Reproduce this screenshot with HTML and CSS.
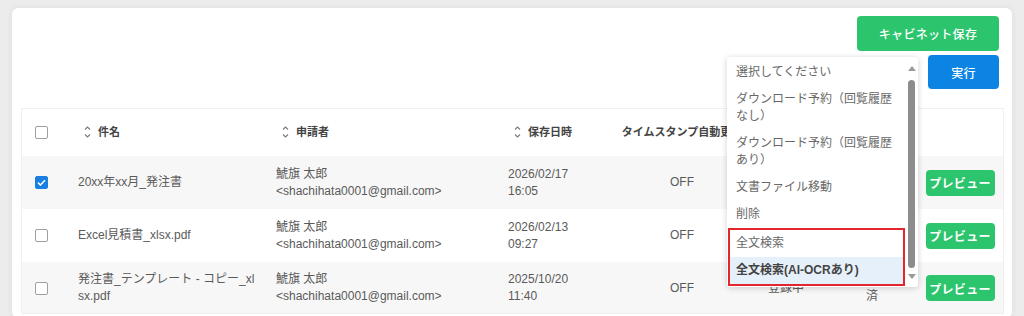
FILE: index.html
```html
<!DOCTYPE html>
<html lang="ja">
<head>
<meta charset="utf-8">
<title>文書一覧</title>
<link rel="stylesheet" href="styles.css">
</head>
<body>
<div class="page">
  <div class="card">
    <div class="toolbar">
      <button class="btn btn-green btn-cabinet">キャビネット保存</button>
      <button class="btn btn-blue btn-exec">実行</button>
      <div class="dropdown">
        <div class="dd-list">
          <div class="dd-item">選択してください</div>
          <div class="dd-item">ダウンロード予約（回覧履歴なし）</div>
          <div class="dd-item">ダウンロード予約（回覧履歴あり）</div>
          <div class="dd-item">文書ファイル移動</div>
          <div class="dd-item">削除</div>
          <div class="dd-group">
            <div class="dd-item">全文検索</div>
            <div class="dd-item dd-active">全文検索(AI-OCRあり)</div>
          </div>
        </div>
        <div class="dd-scroll">
          <span class="arrow-up"></span>
          <span class="thumb"></span>
          <span class="arrow-down"></span>
        </div>
      </div>
    </div>

    <div class="table">
      <div class="row head">
        <div class="cell c-check"><span class="checkbox"></span></div>
        <div class="cell sort"><svg class="sort-ic" width="7" height="14" viewBox="0 0 7 14"><path d="M1 4.5L3.5 2L6 4.5M1 9.5L3.5 12L6 9.5" fill="none" stroke="#7a7a7a" stroke-width="1.1"/></svg><span>件名</span></div>
        <div class="cell sort"><svg class="sort-ic" width="7" height="14" viewBox="0 0 7 14"><path d="M1 4.5L3.5 2L6 4.5M1 9.5L3.5 12L6 9.5" fill="none" stroke="#7a7a7a" stroke-width="1.1"/></svg><span>申請者</span></div>
        <div class="cell sort"><svg class="sort-ic" width="7" height="14" viewBox="0 0 7 14"><path d="M1 4.5L3.5 2L6 4.5M1 9.5L3.5 12L6 9.5" fill="none" stroke="#7a7a7a" stroke-width="1.1"/></svg><span>保存日時</span></div>
        <div class="cell center">タイムスタンプ自動更新</div>
        <div class="cell center"></div>
        <div class="cell center"></div>
        <div class="cell"></div>
      </div>

      <div class="row gray">
        <div class="cell c-check"><span class="checkbox checked"><svg width="9" height="7" viewBox="0 0 9 7"><path d="M1 3.6L3.4 6L8 1.2" fill="none" stroke="#fff" stroke-width="1.5"/></svg></span></div>
        <div class="cell c-name">20xx年xx月_発注書</div>
        <div class="cell">鯱旗 太郎<br>&lt;shachihata0001@gmail.com&gt;</div>
        <div class="cell">2026/02/17<br>16:05</div>
        <div class="cell center">OFF</div>
        <div class="cell center"></div>
        <div class="cell center"></div>
        <div class="cell center"><button class="btn btn-green btn-preview">プレビュー</button></div>
      </div>

      <div class="row">
        <div class="cell c-check"><span class="checkbox"></span></div>
        <div class="cell c-name">Excel見積書_xlsx.pdf</div>
        <div class="cell">鯱旗 太郎<br>&lt;shachihata0001@gmail.com&gt;</div>
        <div class="cell">2026/02/13<br>09:27</div>
        <div class="cell center">OFF</div>
        <div class="cell center"></div>
        <div class="cell center"></div>
        <div class="cell center"><button class="btn btn-green btn-preview">プレビュー</button></div>
      </div>

      <div class="row gray last">
        <div class="cell c-check"><span class="checkbox"></span></div>
        <div class="cell c-name">発注書_テンプレート - コピー_xlsx.pdf</div>
        <div class="cell">鯱旗 太郎<br>&lt;shachihata0001@gmail.com&gt;</div>
        <div class="cell">2025/10/20<br>11:40</div>
        <div class="cell center">OFF</div>
        <div class="cell center">登録中</div>
        <div class="cell center">処理<br>済</div>
        <div class="cell center"><button class="btn btn-green btn-preview">プレビュー</button></div>
      </div>
    </div>
  </div>
</div>
</body>
</html>
```

FILE: styles.css
```css
* { box-sizing: border-box; }
html, body { margin: 0; padding: 0; }
body {
  background: #ececec;
  font-family: "Liberation Sans", "Noto Sans CJK JP", sans-serif;
  color: #5a5a5a;
  font-size: 12px;
  overflow: hidden;
}
.page { padding: 8px 12px 0 12px; }
.card {
  background: #fff;
  border-radius: 6px;
  box-shadow: 0 0 6px rgba(0,0,0,0.07);
  padding: 8px 8px 0 9px;
  min-height: 310px;
}
.toolbar {
  position: relative;
  display: flex;
  flex-direction: column;
  align-items: flex-end;
  gap: 4px;
  padding-right: 5px;
}
.btn {
  border: none;
  color: #fff;
  font-family: "Liberation Sans", "Noto Sans CJK JP", sans-serif;
  font-size: 12px;
  font-weight: 500;
  border-radius: 4px;
  padding: 0;
  display: inline-flex;
  align-items: center;
  justify-content: center;
  letter-spacing: 0.3px;
}
.btn-green { background: #2cc56e; }
.btn-blue { background: #0c84e4; }
.btn-cabinet { width: 142px; height: 35px; }
.btn-exec { width: 71px; height: 34px; }
.btn-preview { width: 69px; height: 26px; font-weight: 700; }

/* dropdown overlay */
.dropdown {
  position: absolute;
  left: 706px;
  top: 41px;
  width: 191px;
  height: 230px;
  background: #fff;
  border-radius: 3px;
  box-shadow: 0 1px 6px rgba(0,0,0,0.18);
  display: flex;
  z-index: 10;
}
.dd-list {
  width: 178px;
  padding-top: 2px;
}
.dd-item {
  padding: 5px 9px;
  line-height: 17px;
  color: #686868;
  font-size: 12px;
}
.dd-group {
  margin-left: 1px;
  border: 2px solid #e3262b;
}
.dd-group .dd-item { padding-left: 6px; }
.dd-active {
  background: #e6f0fa;
  color: #444;
  font-weight: 700;
}
.dd-scroll {
  width: 13px;
  display: flex;
  flex-direction: column;
  align-items: center;
  padding-top: 9px;
}
.arrow-up, .arrow-down {
  width: 0; height: 0;
  border-left: 4px solid transparent;
  border-right: 4px solid transparent;
}
.arrow-up { border-bottom: 5px solid #9a9a9a; }
.arrow-down { border-top: 5px solid #9a9a9a; }
.thumb {
  width: 7px;
  height: 188px;
  background: #8c8c8c;
  border-radius: 4px;
  margin: 9px 0 6px;
}

/* table */
.table {
  margin-top: 19px;
  outline: 1px solid #f0f0f0;
  outline-offset: -1px;
}
.row {
  display: grid;
  grid-template-columns: 57px 198px 232px 112px 124px 84px 88px 88px;
  align-items: center;
  height: 53px;
  line-height: 17px;
  background: #fff;
}
.row.head { height: 48px; }
.row.gray { background: #f7f7f7; }
.row.last { height: 52px; }
.cell { min-width: 0; }
.center { text-align: center; }
.head .cell {
  font-weight: 700;
  font-size: 11px;
  color: #444;
}
.sort {
  display: flex;
  align-items: center;
  gap: 7px;
  padding-left: 6px;
}
.c-check { padding-left: 14px; display: flex; align-items: center; }
.c-name { padding-right: 18px; word-break: break-all; }
.checkbox {
  width: 13px; height: 13px;
  border: 1.5px solid #a0a0a0;
  border-radius: 2px;
  background: #fff;
  display: inline-flex;
  align-items: center;
  justify-content: center;
}
.checkbox.checked {
  background: #1a7fe3;
  border-color: #1a7fe3;
}
```
